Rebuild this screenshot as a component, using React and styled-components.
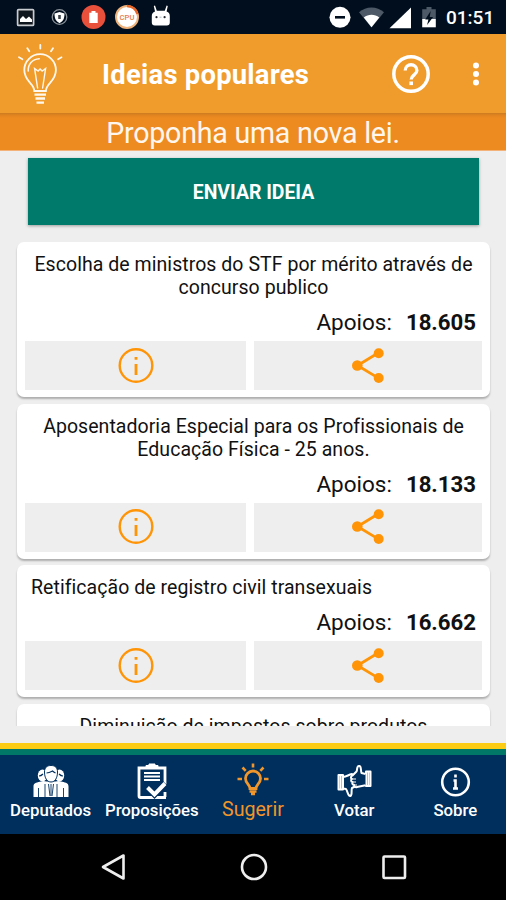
import React from 'react';
import styled, { createGlobalStyle } from 'styled-components';

const GlobalStyle = createGlobalStyle`
  * {
    box-sizing: border-box;
  }

  body {
    margin: 0;
    background: #000;
    font-family: Roboto, 'Liberation Sans', sans-serif;
  }

  button {
    border: 0;
    padding: 0;
    font: inherit;
    color: inherit;
  }

  svg {
    display: block;
    flex: none;
  }
`;

const Screen = styled.div`
  display: flex;
  flex-direction: column;
  width: 506px;
  height: 900px;
  overflow: hidden;
  background: #eee;
`;

const StatusBar = styled.div`
  flex: none;
  display: flex;
  align-items: center;
  justify-content: space-between;
  height: 34px;
  padding: 0 10px 0 16px;
  background: #000e1d;
  color: #fff;
`;

const StatusGroup = styled.div`
  display: flex;
  align-items: center;
  height: 34px;
`;

const Clock = styled.span`
  width: 50px;
  margin-left: 8px;
  padding-top: 2px;
  font-size: 19px;
  font-weight: 500;
  line-height: 22px;
  white-space: nowrap;
`;

const AppBar = styled.header`
  flex: none;
  display: flex;
  align-items: center;
  height: 79px;
  padding: 0 26px 0 16px;
  background: #f09c2c;
  color: #fff;
`;

const AppTitle = styled.h1`
  flex: 1;
  margin: 3px 0 0 38px;
  font-size: 27.4px;
  font-weight: 700;
  letter-spacing: 0.25px;
  white-space: nowrap;
`;

const IconButton = styled.button`
  display: flex;
  margin-left: ${props => props.$gap || 0}px;
  background: none;
`;

const Banner = styled.div`
  flex: none;
  height: 38px;
  padding-top: 4px;
  background: linear-gradient(#c97b20 0, #e0831f 2px, #ed8b20 5px);
  border-bottom: 1px solid #f2b27a;
  color: #fff7ee;
  font-size: 28.6px;
  line-height: 33px;
  letter-spacing: -0.22px;
  text-align: center;
`;

const Content = styled.main`
  flex: none;
  display: flex;
  flex-direction: column;
  height: 575px;
  padding: 7px 16px 0 17px;
  overflow: hidden;
`;

const SendButton = styled.button`
  flex: none;
  height: 67px;
  margin: 0 11px 17px;
  padding-top: 1px;
  background: #007a6b;
  box-shadow: 0 1px 3px rgba(0, 0, 0, 0.35);
  color: #fff;
  font-size: 19.4px;
  font-weight: 700;
`;

const CardList = styled.div`
  display: flex;
  flex-direction: column;
  gap: 6.7px;
`;

const Card = styled.article`
  flex: none;
  padding: 11px 8px 7px;
  border-radius: 7px;
  background: #fff;
  box-shadow: 0 2px 2px rgba(0, 0, 0, 0.27);
`;

const CardTitle = styled.h2`
  margin: 0 ${props => (props.$left ? 6 : 0)}px;
  color: #111;
  font-size: 19.5px;
  font-weight: 400;
  line-height: 23px;
  letter-spacing: 0.05px;
  text-align: ${props => (props.$left ? 'left' : 'center')};
  white-space: pre-line;
`;

const Support = styled.div`
  display: flex;
  justify-content: flex-end;
  gap: 14px;
  height: 42px;
  padding: 10px 6px 0 0;
  color: #111;
  font-size: 22.5px;
  line-height: 26px;

  strong {
    font-size: 22.2px;
    font-weight: 700;
  }
`;

const Actions = styled.div`
  display: grid;
  grid-template-columns: 221px 1fr;
  gap: 8px;
`;

const ActionButton = styled.button`
  display: flex;
  align-items: center;
  justify-content: center;
  height: 49px;
  background: #eee;
`;

const Stripe = styled.div`
  flex: none;
  height: ${props => props.$height}px;
  background: ${props => props.$color};
`;

const Spacer = styled.div`
  flex: 1;
`;

const TabBar = styled.nav`
  flex: none;
  display: grid;
  grid-template-columns: repeat(5, 1fr);
  height: 79px;
  background: #002e5d;
`;

const Tab = styled.button`
  display: flex;
  flex-direction: column;
  align-items: center;
  padding-top: 7px;
  background: none;
  color: ${props => (props.$active ? '#f0962a' : '#fff')};
  font-size: ${props => (props.$active ? 19.6 : 16.8)}px;
  font-weight: ${props => (props.$active ? 400 : 500)};
  line-height: 20px;
`;

const SystemNav = styled.div`
  flex: none;
  display: flex;
  align-items: center;
  justify-content: space-between;
  height: 66px;
  padding: 0 96px 1px 97px;
  background: #000;
`;

const NotificationIcons = () => (
  <svg width="160" height="34" viewBox="16 0 160 34">
    <rect x="17.6" y="9.6" width="16" height="15.8" rx="1" fill="#10161d" stroke="#c9ccd0" strokeWidth="1.7" />
    <path d="M20 22v-3l3-3 3 3 3-2.5 3 3V22z" fill="#fff" />
    <circle cx="59.5" cy="17" r="7.3" fill="none" stroke="#8b929a" strokeWidth="1.3" />
    <path d="M59.5 12l5 1.6c0 5-1.2 7.7-5 9.6-3.8-1.9-5-4.6-5-9.6z" fill="#fff" />
    <path d="M58.2 15h2.6v4h-2.6z" fill="#3d444c" />
    <circle cx="93.5" cy="17" r="12" fill="#e8503c" />
    <path d="M91.5 11h4v1.7h2.2V23h-8.4V12.7h2.2z" fill="#fff" />
    <circle cx="127" cy="17" r="11" fill="#fff" stroke="#eeb27a" strokeWidth="2" />
    <path d="M127 6a11 11 0 0 1 10.5 8" fill="none" stroke="#e8662a" strokeWidth="2.4" />
    <text x="127" y="19.8" textAnchor="middle" fontSize="7.6" fontWeight="500" fill="#ea7a45">CPU</text>
    <path d="M155 5.5l1.8 5.2h8L166.6 5.5l1.2.4-1.2 5.6c2.4.8 3.2 2.2 3.2 4.5v6.5c0 2-1 3-3 3h-12c-2 0-3-1-3-3V16c0-2.4 1-3.7 3.2-4.5l-1.2-5.6z" fill="#fff" />
    <circle cx="156.5" cy="17.2" r="1.1" fill="#23262b" />
    <circle cx="164.6" cy="17.2" r="1.1" fill="#23262b" />
    <path d="M159.5 17.2h2" stroke="#9aa" strokeWidth="0.8" />
  </svg>
);

const SystemIcons = () => (
  <svg width="110" height="34" viewBox="328 0 110 34">
    <circle cx="340" cy="17.3" r="10.5" fill="#fff" />
    <path d="M335 17.3h10" stroke="#000e1d" strokeWidth="2.6" />
    <path d="M359 12.3C366 6 377 6 384 12.3L371.5 27.5z" fill="#4d5966" />
    <path d="M363.8 17.5c4.5-3.8 11-3.8 15.5 0l-7.8 9.8z" fill="#fff" />
    <path d="M411 7.5V28.3H389.5z" fill="#fff" />
    <path d="M426.5 7h5v2.2h4.3V19H422.2V9.2h4.3z" fill="#4d5966" />
    <path d="M422.2 19h13.6v8.3h-13.6z" fill="#fff" />
    <path d="M430.7 11l-5.5 8.5h3.2l-1.3 5.5 6-8h-3.4z" fill="#000e1d" />
  </svg>
);

const BulbLogo = () => (
  <svg width="48" height="64" viewBox="16 42 48 64" fill="none" stroke="#fff8ee" strokeWidth="1.8" strokeLinecap="round">
    <path d="M34.3 91c0-7.5-10-9.5-10-21a15.8 15.8 0 0 1 31.6 0c0 11.5-10 13.500-10 21z" />
    <path d="M28.2 71c-.3-7 4-11.8 11-12.3" strokeWidth="1.6" />
    <path d="M37.6 88l-3-19.5 3.5 2.5 2-2 2 2 3.5-2.5-3 19.5" strokeWidth="1.4" />
    <path d="M34.5 94.7h11.5M35.5 98.5h9.5M36.5 102.7h7.5" strokeWidth="2.3" strokeLinecap="butt" />
    <path d="M40.3 45v3.5M27.3 48.3l2 3M53 48.3l-2 3M19 57.3l3.4 2M61.5 57.3l-3.4 2" />
  </svg>
);

const HelpIcon = () => (
  <svg width="40" height="40" viewBox="0 0 40 40" fill="none" stroke="#fff">
    <circle cx="20" cy="20" r="17.2" strokeWidth="3.5" />
    <path d="M14.2 16.5c0-7.7 11.7-7.7 11.7 0 0 4.3-5.7 4.5-5.7 9" strokeWidth="3.3" />
    <path d="M18.4 27.5h3.6v3.6h-3.6z" fill="#fff" stroke="none" />
  </svg>
);

const MoreIcon = () => (
  <svg width="8" height="26" viewBox="0 0 8 26" fill="#fff">
    <circle cx="4" cy="4.5" r="3" />
    <circle cx="4" cy="13" r="3" />
    <circle cx="4" cy="21.5" r="3" />
  </svg>
);

const InfoIcon = () => (
  <svg width="36" height="36" viewBox="0 0 36 36" fill="none" stroke="#ff9407">
    <circle cx="18" cy="17.5" r="16.3" strokeWidth="2.4" />
    <path d="M18 9v2.800M18 16v11" strokeWidth="2.8" />
  </svg>
);

const ShareIcon = () => (
  <svg width="34" height="36" viewBox="0 0 34 36" fill="#ff9407">
    <path d="M27.5 4.8L6.500 17.500l21 12.600" fill="none" stroke="#ff9407" strokeWidth="2.8" />
    <circle cx="27.7" cy="5.2" r="5" />
    <circle cx="6.3" cy="17.5" r="5.3" />
    <circle cx="27.7" cy="30" r="5" />
  </svg>
);

const PeopleIcon = () => (
  <svg width="38" height="38" viewBox="0 0 38 38" fill="#fff">
    <path d="M1.5 35V24.5c0-2.5 1-3.5 5-4.500l5-1 3 .5h9l3-.5 5 1c4 1 5 2 5 4.500V35z" />
    <ellipse cx="10.5" cy="13.5" rx="4.7" ry="6" />
    <ellipse cx="27.5" cy="13.5" rx="4.7" ry="6" />
    <path d="M12.5 10c0-5 3-6.5 6.5-6.500s6.500 1.500 6.500 6.500c0 6-2.500 10-6.500 10s-6.500-4-6.500-10z" stroke="#002e5d" />
    <path d="M14.5 11c3-.2 5-1.500 6-2 1 1 2 1.500 3 2M7 14c2 0 3-1 4-2M27 12c1 1 2 2 4 2" fill="none" stroke="#002e5d" strokeWidth="1.2" />
    <path d="M6.5 26v9M31.5 26v9M13 22v13M25 22v13M19 22v12M16.500 22l1.500 12M21.500 22L20 34" fill="none" stroke="#002e5d" strokeWidth="0.9" />
  </svg>
);

const ClipboardIcon = () => (
  <svg width="38" height="38" viewBox="0 0 38 38" fill="none" stroke="#fff">
    <path d="M33 35.5H7.5Q6 35.5 6 34V6h26v16M32 30v5" strokeWidth="2.8" />
    <path d="M13 6V3.5h3V2h6v1.500h3V6" fill="#fff" strokeWidth="1" />
    <path d="M11 11h16M11 14.500h16M11 18h16" strokeWidth="2" />
    <path d="M15.5 26l6 6L32 21" stroke="#002e5d" strokeWidth="7" />
    <path d="M14.5 25.500l7 7 10.500-11" strokeWidth="4" />
  </svg>
);

const IdeaIcon = () => (
  <svg width="38" height="38" viewBox="0 0 38 38" fill="none" stroke="#f0962a" strokeWidth="2.8">
    <path d="M16 26.5c0-4-4.500-5-4.500-10a7.500 7.500 0 0 1 15 0c0 5-4.500 6-4.500 10z" />
    <path d="M15.5 29.500h7M17 32h4" strokeWidth="2.4" />
    <path d="M19 1.5v4M8.500 5.500l3.200 3.300M29.500 5.500l-3.200 3.300M3.500 17h4.500M30 17h4.500" strokeWidth="2.6" />
  </svg>
);

const VoteIcon = () => (
  <svg width="38" height="38" viewBox="0 0 38 38" fill="none" stroke="#fff" strokeWidth="2" strokeLinejoin="round">
    <path d="M3.500 13H8v14.500H3.500zM5.700 13v14" />
    <path d="M8 15c4-.5 5-2 9-3l3 2.500v10l-3 1.500c-1 2 .5 7-1.500 8-3 .5-2.500-4.500-4.500-7l-3-.5" />
    <path d="M31 9.500h4.500V24H31zM33.300 10v14" />
    <path d="M30.500 12l-4-1c-1-3 0-6.500-2-7-3-.5-2 4-3 5.500l-4 4c-2 .5-2 3-.5 3.500-1.500 1-1 3 .5 3-.7 1.800.5 3 1.500 2.800 0 2 1.500 2.700 3 2.200l8.500-1.800" fill="#002e5d" />
    <path d="M17.500 17h3.500M18 20h3M19.500 23h2.500" strokeWidth="1.2" />
  </svg>
);

const AboutIcon = () => (
  <svg width="38" height="38" viewBox="0 0 38 38" fill="none" stroke="#fff">
    <circle cx="19.5" cy="20" r="13.3" strokeWidth="2.6" />
    <path d="M19.5 12.500v3M17.500 18.500h2v8M17 26.500h5" strokeWidth="2.6" />
  </svg>
);

const ideas = [
  {
    title: 'Escolha de ministros do STF por mérito através de\nconcurso publico',
    support: '18.605',
  },
  {
    title: 'Aposentadoria Especial para os Profissionais de\nEducação Física - 25 anos.',
    support: '18.133',
  },
  {
    title: 'Retificação de registro civil transexuais',
    support: '16.662',
    left: true,
  },
];

const tabs = [
  { label: 'Deputados', Icon: PeopleIcon },
  { label: 'Proposições', Icon: ClipboardIcon },
  { label: 'Sugerir', Icon: IdeaIcon, active: true },
  { label: 'Votar', Icon: VoteIcon },
  { label: 'Sobre', Icon: AboutIcon },
];

const IdeaCard = ({ title, support, left }) => (
  <Card>
    <CardTitle $left={left}>{title}</CardTitle>
    <Support>
      <span>Apoios:</span>
      <strong>{support}</strong>
    </Support>
    <Actions>
      <ActionButton aria-label="Informações">
        <InfoIcon />
      </ActionButton>
      <ActionButton aria-label="Compartilhar">
        <ShareIcon />
      </ActionButton>
    </Actions>
  </Card>
);

const App = () => {
  return (
    <Screen>
      <GlobalStyle />
      <StatusBar>
        <NotificationIcons />
        <StatusGroup>
          <SystemIcons />
          <Clock>01:51</Clock>
        </StatusGroup>
      </StatusBar>
      <AppBar>
        <BulbLogo />
        <AppTitle>Ideias populares</AppTitle>
        <IconButton aria-label="Ajuda">
          <HelpIcon />
        </IconButton>
        <IconButton aria-label="Mais" $gap={41}>
          <MoreIcon />
        </IconButton>
      </AppBar>
      <Banner>Proponha uma nova lei.</Banner>
      <Content>
        <SendButton>ENVIAR IDEIA</SendButton>
        <CardList>
          {ideas.map(idea => (
            <IdeaCard key={idea.support} {...idea} />
          ))}
          <Card>
            <CardTitle>Diminuição de impostos sobre produtos</CardTitle>
          </Card>
        </CardList>
      </Content>
      <Spacer />
      <Stripe $height={6} $color="#fccb14" />
      <Stripe $height={6} $color="#007767" />
      <TabBar>
        {tabs.map(({ label, Icon, active }) => (
          <Tab key={label} $active={active}>
            <Icon />
            {label}
          </Tab>
        ))}
      </TabBar>
      <SystemNav>
        <svg width="32" height="32" viewBox="0 0 32 32" fill="none" stroke="#eee" strokeWidth="2.6">
          <path d="M26.5 4.5v23L6 16z" strokeLinejoin="round" />
        </svg>
        <svg width="32" height="32" viewBox="0 0 32 32" fill="none" stroke="#eee" strokeWidth="2.6">
          <circle cx="16" cy="16" r="12" />
        </svg>
        <svg width="32" height="32" viewBox="0 0 32 32" fill="none" stroke="#eee" strokeWidth="2.6">
          <rect x="5.5" y="5.5" width="21.5" height="21.5" rx="1" />
        </svg>
      </SystemNav>
    </Screen>
  );
};

export default App;
